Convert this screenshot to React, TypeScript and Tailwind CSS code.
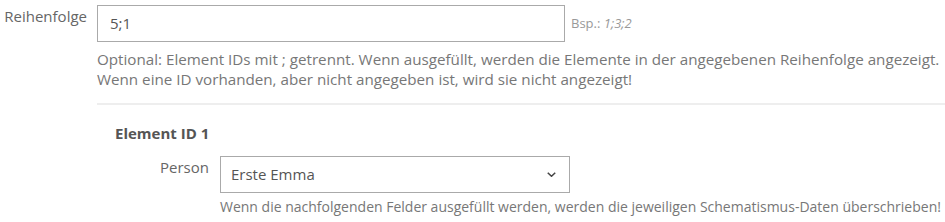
import React from "react";

export default function App() {
  return (
    <div className="w-[945px] h-[222px] bg-white overflow-hidden text-[#666] font-['Open_Sans',sans-serif]">
      <div className="flex pt-[5px]">
        {/* Label column */}
        <label className="w-[97px] shrink-0 pr-[10px] pt-[1px] text-right text-[15px] leading-[20px] text-[#666]">
          Reihenfolge
        </label>

        <div className="flex-1">
          {/* Order input */}
          <div className="flex items-center">
            <div className="w-[468px] h-[37px] border border-[#aaa] flex items-center px-[12px] text-[15px] text-[#555]">
              5;1
            </div>
            <span className="ml-[6px] text-[13px] text-[#999]">
              Bsp.: <i>1;3;2</i>
            </span>
          </div>
          <p className="mt-[7px] text-[15.2px] leading-[20px] text-[#777] whitespace-nowrap">
            Optional: Element IDs mit ; getrennt. Wenn ausgefüllt, werden die Elemente in der angegebenen Reihenfolge angezeigt.
            <br />
            Wenn eine ID vorhanden, aber nicht angegeben ist, wird sie nicht angezeigt!
          </p>
          <div className="mt-[14px] h-[2px] bg-[#eee]" />

          {/* Element section */}
          <div className="pl-[18px] pt-[18px]">
            <h4 className="text-[15px] leading-[20px] font-bold text-[#555]">Element ID 1</h4>
            <div className="flex mt-[13px]">
              <label className="w-[105px] shrink-0 pr-[11px] pt-[1px] text-right text-[15px] leading-[20px] text-[#666]">
                Person
              </label>
              <div>
                <div className="w-[350px] h-[37px] border border-[#aaa] flex items-center justify-between pl-[10px] pr-[13px] text-[15px] text-[#555]">
                  <span>Erste Emma</span>
                  <svg width="9" height="5" viewBox="0 0 9 5" fill="none" stroke="#444" strokeWidth="1.5">
                    <path d="M0.75 0.75l3.75 3.5 3.75-3.5" />
                  </svg>
                </div>
                <p className="mt-[5px] text-[14px] leading-[18px] text-[#777] whitespace-nowrap">
                  Wenn die nachfolgenden Felder ausgefüllt werden, werden die jeweiligen Schematismus-Daten überschrieben!
                </p>
              </div>
            </div>
          </div>
        </div>
      </div>
    </div>
  );
}
